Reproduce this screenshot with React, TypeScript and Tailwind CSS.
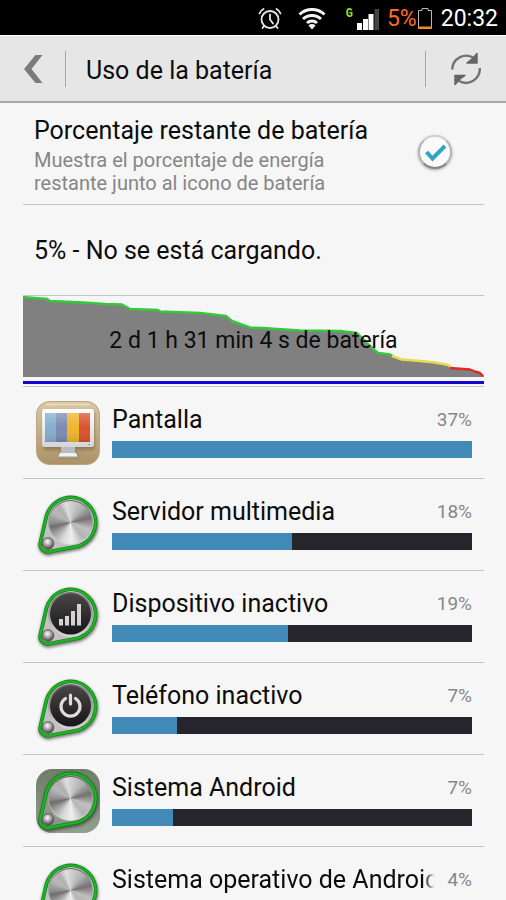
import { useState } from "react";

type IconKind = "screen" | "dial" | "signal" | "power" | "dialTile";

interface UsageItem {
  name: string;
  percent: number;
  fill: number; // bar length relative to the biggest consumer
  icon: IconKind;
}

const items: UsageItem[] = [
  { name: "Pantalla", percent: 37, fill: 100, icon: "screen" },
  { name: "Servidor multimedia", percent: 18, fill: 50, icon: "dial" },
  { name: "Dispositivo inactivo", percent: 19, fill: 49, icon: "signal" },
  { name: "Teléfono inactivo", percent: 7, fill: 18, icon: "power" },
  { name: "Sistema Android", percent: 7, fill: 17, icon: "dialTile" },
  { name: "Sistema operativo de Android", percent: 4, fill: 10, icon: "dial" },
];

// Shared gradients for the row icons
function IconDefs() {
  return (
    <svg className="absolute h-0 w-0" aria-hidden="true">
      <defs>
        <linearGradient id="tan" x1="0" y1="0" x2="0" y2="1">
          <stop offset="0" stopColor="#d9c9a6" />
          <stop offset="1" stopColor="#ab9166" />
        </linearGradient>
        <linearGradient id="frame" x1="0" y1="0" x2="0" y2="1">
          <stop offset="0" stopColor="#ffffff" />
          <stop offset="1" stopColor="#d5d5d8" />
        </linearGradient>
        <linearGradient id="shade" x1="0" y1="0" x2="0" y2="1">
          <stop offset="0" stopColor="#fff" stopOpacity="0.25" />
          <stop offset="0.5" stopColor="#fff" stopOpacity="0" />
          <stop offset="1" stopColor="#000" stopOpacity="0.12" />
        </linearGradient>
        <linearGradient id="black" x1="0" y1="0" x2="0" y2="1">
          <stop offset="0" stopColor="#4a4648" />
          <stop offset="1" stopColor="#171517" />
        </linearGradient>
        <linearGradient id="rim" x1="0" y1="0" x2="0" y2="1">
          <stop offset="0" stopColor="#6d6669" />
          <stop offset="1" stopColor="#d8d8d8" />
        </linearGradient>
        <linearGradient id="tile" x1="0" y1="0" x2="0" y2="1">
          <stop offset="0" stopColor="#6d7d68" />
          <stop offset="1" stopColor="#93a08d" />
        </linearGradient>
        <radialGradient id="ball" cx="0.45" cy="0.35" r="0.65">
          <stop offset="0" stopColor="#ffffff" />
          <stop offset="0.5" stopColor="#a5a0a3" />
          <stop offset="1" stopColor="#3b383a" />
        </radialGradient>
        <filter id="soft" x="-20%" y="-20%" width="140%" height="140%">
          <feGaussianBlur stdDeviation="1.4" />
        </filter>
      </defs>
    </svg>
  );
}

function ScreenIcon() {
  return (
    <svg viewBox="0 0 64 64" className="h-16 w-16 shrink-0" aria-hidden="true">
      <rect x="0.5" y="0.5" width="63" height="63" rx="13" fill="url(#tan)" stroke="#b9a47c" />
      <path d="M10 3.5h44" stroke="#efe6cf" strokeWidth="1.5" opacity="0.7" />
      <rect x="7" y="10" width="52" height="39" rx="3" fill="#6f5c3b" opacity="0.5" filter="url(#soft)" />
      <path d="M25 47h15v6h3v4H23v-4h2z" fill="#77664a" opacity="0.5" filter="url(#soft)" />
      <path d="M25 46h14v7H25z" fill="#b9bcc0" />
      <path d="M24 52h16l2 4H22z" fill="#f1f1f1" />
      <path d="M22 55.5h20v1.5H22z" fill="#9c9a97" />
      <rect x="6" y="8" width="52" height="38" rx="2.5" fill="url(#frame)" />
      <path d="M9 12h11v29H9z" fill="#86afcb" />
      <path d="M20 12h11v29H20z" fill="#7b8bb3" />
      <path d="M31 12h12v29H31z" fill="#efb52c" />
      <path d="M43 12h11v29H43z" fill="#d9532f" />
      <path d="M9 12h45v29H9z" fill="url(#shade)" />
      <circle cx="53" cy="43.5" r="0.8" fill="#888" />
    </svg>
  );
}

const BELT = "M10.5 23A25 25 0 1 1 43 53L14 58.5A7.5 7.5 0 0 1 4.5 49Z";

// Round knob joined to a small ball by a green belt
function DialIcon({ face, tile }: { face: "metal" | "signal" | "power"; tile?: boolean }) {
  return (
    <svg viewBox="0 0 64 64" className="h-16 w-16 shrink-0 overflow-visible" aria-hidden="true">
      {tile && <rect x="0" y="0" width="64" height="64" rx="16" fill="url(#tile)" />}
      <path d={BELT} transform="translate(0.5 1.5)" fill="#555" stroke="#222" strokeWidth="4.5" opacity="0.6" filter="url(#soft)" />
      <path d={BELT} fill={tile ? "#8c9788" : "#c4c0c2"} stroke="#0c7a14" strokeWidth="3.6" strokeLinejoin="round" />
      <path d={BELT} fill="none" stroke="#1cb424" strokeWidth="2.4" strokeLinejoin="round" />
      <circle cx="12" cy="50.5" r="5.8" fill="url(#ball)" stroke="#5f5b5d" />
      <circle cx="34.5" cy="29.5" r="22.5" fill="url(#rim)" />
      {face === "metal" ? (
        <foreignObject x="13" y="8" width="43" height="43">
          <div className="h-full w-full rounded-full bg-[conic-gradient(from_0deg,#d2d2d2,#b0b0b0_40deg,#747273_76deg,#8a8888_86deg,#c0c0c0_110deg,#b4b4b4_140deg,#efefef_175deg,#d8d8d8_205deg,#9f9f9f_235deg,#6e6c6d_258deg,#8d8b8c_268deg,#b8b8b8_300deg,#b0b0b0_325deg,#dedede_345deg,#d2d2d2)]" />
        </foreignObject>
      ) : (
        <circle cx="34.5" cy="29" r="20.5" fill="url(#black)" />
      )}
      {face === "signal" && (
        <g fill="#d4d2d3">
          <rect x="23" y="34" width="4" height="6.5" />
          <rect x="29" y="31" width="4" height="9.5" />
          <rect x="35" y="26" width="4" height="14.5" />
          <rect x="41" y="19" width="4" height="21.5" />
        </g>
      )}
      {face === "power" && (
        <g fill="none" stroke="#dedcdd" strokeWidth="3.2" strokeLinecap="round">
          <path d="M29.5 21.5a9.5 9.5 0 1 0 10 0" />
          <path d="M34.5 18v9" />
        </g>
      )}
    </svg>
  );
}

function RowIcon({ kind }: { kind: IconKind }) {
  if (kind === "screen") return <ScreenIcon />;
  if (kind === "signal") return <DialIcon face="signal" />;
  if (kind === "power") return <DialIcon face="power" />;
  return <DialIcon face="metal" tile={kind === "dialTile"} />;
}

function StatusBar() {
  return (
    <div className="flex h-[35px] shrink-0 items-center justify-end bg-black pt-0.5 pr-2 text-white">
      <svg viewBox="0 0 24 24" className="mr-4 h-6 w-6" fill="none" stroke="#e8e8e8" strokeWidth="1.8" strokeLinecap="round" aria-hidden="true">
        <circle cx="12" cy="12.5" r="8.5" />
        <path d="M12 7.5v5l3 4M1.5 6.5c.6-2 2-3.5 4-4.5M22.5 6.5c-.6-2-2-3.5-4-4.5M6 19l-1.5 2M18 19l1.5 2" />
      </svg>
      <svg viewBox="0 0 28 22" className="mr-5 h-[22px] w-7" fill="none" stroke="#f4f4f4" strokeWidth="3" aria-hidden="true">
        <path d="M1.5 6.5a18 18 0 0 1 25 0M5 11a13 13 0 0 1 18 0M9 15a7.5 7.5 0 0 1 10 0" />
        <path d="M10.5 17.5a5 5 0 0 1 7 0L14 21.5z" fill="#f4f4f4" stroke="none" />
      </svg>
      <div className="mr-2 flex h-[22px] items-start">
        <span className="font-mono text-[12px] leading-3 font-bold text-[#8fdc2b]">G</span>
        <svg viewBox="0 0 22 22" className="ml-1 h-[22px] w-[22px]" aria-hidden="true">
          <path d="M0 15h5v7H0zM6 11h5v11H6zM11.5 6h5v16h-5z" fill="#fff" />
          <path d="M17.5 1h4.5v21h-4.5z" fill="#444" />
        </svg>
      </div>
      <span className="text-[23px] leading-6 text-[#ff6a22]">5%</span>
      <svg viewBox="0 0 16 22" className="mr-2 h-[22px] w-4" fill="none" aria-hidden="true">
        <path d="M1.5 20.5v-18h3.5v-2h6v2h3.5v18" stroke="#b9b9b9" />
        <path d="M1 18.5h14v2.5H1z" fill="#f58a2c" />
      </svg>
      <span className="text-[23px] leading-6">20:32</span>
    </div>
  );
}

function Header() {
  return (
    <header className="flex h-[68px] shrink-0 items-center border-t border-b-2 border-t-white border-b-[#a8a8a8] bg-[#e6e6e6]">
      <button type="button" aria-label="Atrás" className="flex h-full w-[65px] items-center pl-6">
        <svg viewBox="0 0 20 30" className="h-[30px] w-5" aria-hidden="true">
          <path d="M11.5 1h7L7.5 15l11 14h-7L0 15z" fill="#7b7b7b" />
        </svg>
      </button>
      <div className="h-9 w-px bg-[#a6a6a6]" />
      <h1 className="flex-1 pt-1 pl-5 text-[25px] leading-8">Uso de la batería</h1>
      <div className="h-9 w-px bg-[#a6a6a6]" />
      <button type="button" aria-label="Actualizar" className="flex h-full w-20 items-center justify-center">
        <svg viewBox="0 0 32 34" className="h-[34px] w-8" aria-hidden="true">
          <path d="M2.2 17.5A14 14 0 0 1 23 5.5M29.8 16A14 14 0 0 1 9 29" fill="none" stroke="#737373" strokeWidth="2.4" />
          <path d="M27 1.5v9.5H17L22 7zM5 32.500V23.500H15L10 27z" fill="#666" stroke="#666" strokeWidth="1.5" strokeLinejoin="round" />
        </svg>
      </button>
    </header>
  );
}

function HistoryChart() {
  return (
    <div className="relative">
      <svg viewBox="0 0 461 90" preserveAspectRatio="none" className="block h-[90px] w-full" aria-hidden="true">
        <path
          d="M0 1L24 3 27 5 60 6.5 82 8 99 8.5 107 13 135 14 137 15.5 177 17 203 20 209 25 220 29 227 31.5 239 32 277 34.5 317 35 334 37 339 42 347 50 355 57 367 58.5 370 61 379 63.5 397 65 412 66.5 425 69 428 72 447 73.5 452 75.5 457 77 461 80V81H0Z"
          fill="#808080"
        />
        <g fill="none" strokeWidth="2.4" strokeLinejoin="round">
          <path
            d="M0 1L24 3 27 5 60 6.5 82 8 99 8.5 107 13 135 14 137 15.5 177 17 203 20 209 25 220 29 227 31.5 239 32 277 34.5 317 35 334 37 339 42 347 50 355 57 367 58.5 370 60"
            stroke="#35c83c"
          />
          <path d="M369 60L379 63.5 397 65 412 66.5 425 69 428 71" stroke="#e6dc4a" />
          <path d="M427 72L447 73.5 452 75.5 457 77 460 80" stroke="#e32626" />
        </g>
        <path d="M0 85h461v3H0z" fill="#1405cf" />
      </svg>
      <p className="absolute inset-0 text-center text-[23px] leading-[90px]">
        2 d 1 h 31 min 4 s de batería
      </p>
    </div>
  );
}

function UsageRow({ item }: { item: UsageItem }) {
  return (
    <li className="flex h-[92px] items-center gap-3 border-b border-[#c4c4c4] pr-3 pl-[13px]">
      <RowIcon kind={item.icon} />
      <div className="min-w-0 flex-1 pb-1">
        <div className="flex items-center gap-3">
          <span
            className={`min-w-0 flex-1 overflow-hidden text-[25px] leading-8 whitespace-nowrap ${
              item.name.length > 24 ? "[mask-image:linear-gradient(to_left,transparent,black_12px)]" : ""
            }`}
          >
            {item.name}
          </span>
          <span className="text-[19px] leading-8 text-[#868686]">{item.percent}%</span>
        </div>
        <div className="mt-[5px] h-[17px] bg-[#26252b]">
          <div className="h-full bg-[#4189b7]" style={{ width: `${item.fill}%` }} />
        </div>
      </div>
    </li>
  );
}

export default function App() {
  const [showPercent, setShowPercent] = useState(true);

  return (
    <div className="flex h-screen flex-col overflow-hidden bg-[#f6f6f6] font-['Roboto',sans-serif] text-[#0c0c0c]">
      <IconDefs />
      <StatusBar />
      <Header />
      <main className="min-h-0 flex-1 overflow-hidden pr-[22px] pl-[23px]">
        <label className="flex h-[102px] items-center justify-between border-b border-[#c4c4c4] pr-8 pl-[11px]">
          <span className="pt-0.5">
            <span className="block text-[25px] leading-8">Porcentaje restante de batería</span>
            <span className="mt-0.5 block max-w-[320px] text-[20px] leading-[23px] text-[#868686]">
              Muestra el porcentaje de energía restante junto al icono de batería
            </span>
          </span>
          <span className="relative mb-1 h-[34px] w-[34px] shrink-0">
            <input
              type="checkbox"
              checked={showPercent}
              onChange={(e) => setShowPercent(e.target.checked)}
              className="peer block h-[34px] w-[34px] appearance-none rounded-full border-2 border-t-[#d0d0d0] border-r-[#b5b5b5] border-b-[#858585] border-l-[#b5b5b5] bg-[#fafafa] shadow-[0_1px_3px_rgba(0,0,0,0.35)]"
            />
            <svg viewBox="0 0 34 34" className="pointer-events-none absolute inset-0 hidden peer-checked:block" aria-hidden="true">
              <path d="M8.5 17l6 6.5L27 11" fill="none" stroke="#35a3c6" strokeWidth="4" />
            </svg>
          </span>
        </label>
        <p className="h-[91px] border-b border-[#c4c4c4] pl-[11px] text-[25px] leading-[92px]">
          5% - No se está cargando.
        </p>
        <div className="border-b border-[#c4c4c4]">
          <HistoryChart />
        </div>
        <ul>
          {items.map((item) => (
            <UsageRow key={item.name} item={item} />
          ))}
        </ul>
      </main>
    </div>
  );
}
